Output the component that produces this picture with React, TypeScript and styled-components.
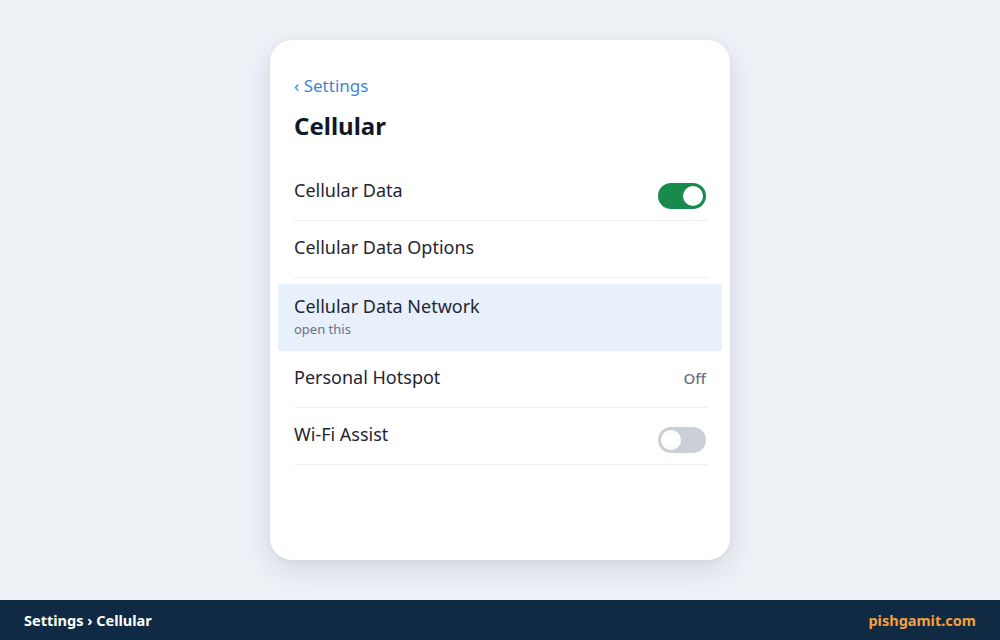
import * as React from 'react'
import styled, { createGlobalStyle } from 'styled-components'

const GlobalStyle = createGlobalStyle`
  html, body {
    margin: 0;
    padding: 0;
    height: 100%;
  }
  body {
    background: #eef1f6;
    font-family: 'Noto Sans', 'Open Sans', sans-serif;
    color: #1f2633;
  }
`

interface RowItem {
  label: string
  sub?: string
  value?: string
  toggle?: boolean
  active?: boolean
}

const rows: RowItem[] = [
  { label: 'Cellular Data', toggle: true },
  { label: 'Cellular Data Options' },
  { label: 'Cellular Data Network', sub: 'open this', active: true },
  { label: 'Personal Hotspot', value: 'Off' },
  { label: 'Wi-Fi Assist', toggle: false },
]

export default function App() {
  return (
    <Page>
      <GlobalStyle />
      <Main>
        <Card>
          <BackLink href="#">‹ Settings</BackLink>
          <Title>Cellular</Title>
          <List>
            {rows.map(row => (
              <Row key={row.label} $active={row.active}>
                <RowText>
                  <RowLabel>{row.label}</RowLabel>
                  {row.sub && <RowSub>{row.sub}</RowSub>}
                </RowText>
                {row.value && <RowValue>{row.value}</RowValue>}
                {row.toggle !== undefined && <Toggle $on={row.toggle} />}
              </Row>
            ))}
          </List>
        </Card>
      </Main>
      <Footer>
        <Crumbs>Settings › Cellular</Crumbs>
        <Brand>pishgamit.com</Brand>
      </Footer>
    </Page>
  )
}

const Page = styled.div`
  display: flex;
  flex-direction: column;
  height: 640px;
`

const Main = styled.main`
  flex: 1;
  display: flex;
  align-items: center;
  justify-content: center;
`

const Card = styled.section`
  box-sizing: border-box;
  width: 460px;
  height: 520px;
  background: #fff;
  border-radius: 22px;
  box-shadow: 0 10px 30px rgba(30, 45, 70, 0.12), 0 2px 6px rgba(30, 45, 70, 0.05);
  padding: 32px 24px 24px;
`

const BackLink = styled.a`
  display: block;
  color: #3f86d6;
  text-decoration: none;
  font-size: 17px;
  line-height: 28px;
`

const Title = styled.h1`
  margin: 10px 0 22px;
  font-size: 24px;
  line-height: 32px;
  font-weight: 700;
  color: #121826;
`

const List = styled.div`
  margin: 0 -16px;
`

const Row = styled.div<{ $active?: boolean }>`
  display: flex;
  align-items: center;
  justify-content: space-between;
  box-sizing: border-box;
  padding: 0 16px;
  min-height: ${p => (p.$active ? '67px' : '57px')};
  margin-top: ${p => (p.$active ? '6px' : '0')};
  background: ${p => (p.$active ? '#e8f0fc' : 'transparent')};
  border-radius: ${p => (p.$active ? '2px' : '0')};
  position: relative;

  &::after {
    content: '';
    display: ${p => (p.$active ? 'none' : 'block')};
    position: absolute;
    left: 16px;
    right: 14px;
    bottom: 0;
    height: 1px;
    background: #eef0f3;
  }
`

const RowText = styled.div`
  display: flex;
  flex-direction: column;
  margin-top: -6px;
`

const RowLabel = styled.span`
  font-size: 18px;
  line-height: 28px;
  color: #1f2633;
`

const RowSub = styled.span`
  font-size: 13px;
  line-height: 18px;
  color: #6b7280;
`

const RowValue = styled.span`
  font-size: 15px;
  font-weight: 500;
  color: #6b7280;
  margin-top: -4px;
`

const Toggle = styled.span<{ $on: boolean }>`
  position: relative;
  display: block;
  width: 48px;
  height: 26px;
  margin-top: 6px;
  border-radius: 13px;
  background: ${p => (p.$on ? '#178a4c' : '#cbd0d8')};
  flex-shrink: 0;

  &::after {
    content: '';
    position: absolute;
    top: 3px;
    left: ${p => (p.$on ? '25px' : '3px')};
    width: 20px;
    height: 20px;
    border-radius: 50%;
    background: #fff;
  }
`

const Footer = styled.footer`
  height: 40px;
  background: #102a43;
  display: flex;
  align-items: center;
  justify-content: space-between;
  padding: 0 24px;
`

const Crumbs = styled.span`
  color: #fff;
  font-weight: 700;
  font-size: 14.5px;
`

const Brand = styled.span`
  color: #f6a03d;
  font-weight: 700;
  font-size: 14.5px;
`
